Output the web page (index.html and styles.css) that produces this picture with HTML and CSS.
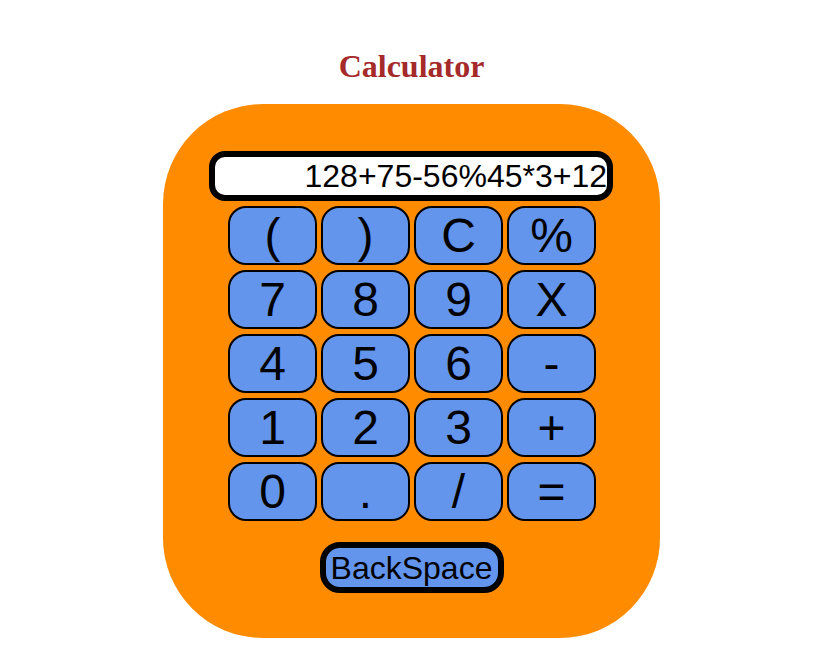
FILE: index.html
```html
<!DOCTYPE html>
<html>
<head>
<meta charset="utf-8">
<title>Calculator</title>
<link rel="stylesheet" href="styles.css">
</head>
<body>
<main class="page">
  <h1 class="title">Calculator</h1>
  <section class="calc">
    <div class="display">128+75-56%45*3+12</div>
    <div class="keys">
      <button class="key">(</button>
      <button class="key">)</button>
      <button class="key">C</button>
      <button class="key">%</button>
      <button class="key">7</button>
      <button class="key">8</button>
      <button class="key">9</button>
      <button class="key">X</button>
      <button class="key">4</button>
      <button class="key">5</button>
      <button class="key">6</button>
      <button class="key">-</button>
      <button class="key">1</button>
      <button class="key">2</button>
      <button class="key">3</button>
      <button class="key">+</button>
      <button class="key">0</button>
      <button class="key">.</button>
      <button class="key">/</button>
      <button class="key">=</button>
    </div>
    <button class="backspace">BackSpace</button>
  </section>
</main>
</body>
</html>
```

FILE: styles.css
```css
html, body {
  margin: 0;
  padding: 0;
  background: #ffffff;
}

.page {
  width: 823px;
  display: flex;
  flex-direction: column;
  align-items: center;
}

.title {
  margin: 48px 0 20px;
  font-family: "Liberation Serif", "Times New Roman", serif;
  font-weight: bold;
  font-size: 32px;
  line-height: 36px;
  color: #a52a2a;
}

.calc {
  box-sizing: border-box;
  width: 497px;
  height: 534px;
  background: #ff8c00;
  border-radius: 100px;
  padding-top: 47px;
  display: flex;
  flex-direction: column;
  align-items: center;
}

.display {
  box-sizing: border-box;
  width: 404px;
  height: 50px;
  margin-left: -1px;
  border: 6px solid #000;
  border-radius: 16px;
  background: #fff;
  font-family: "Liberation Sans", Arial, sans-serif;
  font-size: 32px;
  line-height: 38px;
  text-align: right;
  padding: 0 0 0 0;
  color: #000;
  overflow: hidden;
  white-space: nowrap;
}

.keys {
  margin-top: 5px;
  display: grid;
  grid-template-columns: repeat(4, 89px);
  grid-auto-rows: 59px;
  column-gap: 4px;
  row-gap: 5px;
  margin-left: 1px;
}

.key {
  box-sizing: border-box;
  margin: 0;
  padding: 0;
  border: 2px solid #000;
  border-radius: 18px;
  background: #6495ed;
  color: #000;
  font-family: "Liberation Sans", Arial, sans-serif;
  font-size: 48px;
  line-height: 1;
  display: flex;
  align-items: center;
  justify-content: center;
}

.backspace {
  box-sizing: border-box;
  margin: 21px 0 0;
  width: 184px;
  height: 51px;
  padding: 0;
  border: 6px solid #000;
  border-radius: 20px;
  background: #6495ed;
  color: #000;
  font-family: "Liberation Sans", Arial, sans-serif;
  font-size: 32px;
  line-height: 1;
}
```
